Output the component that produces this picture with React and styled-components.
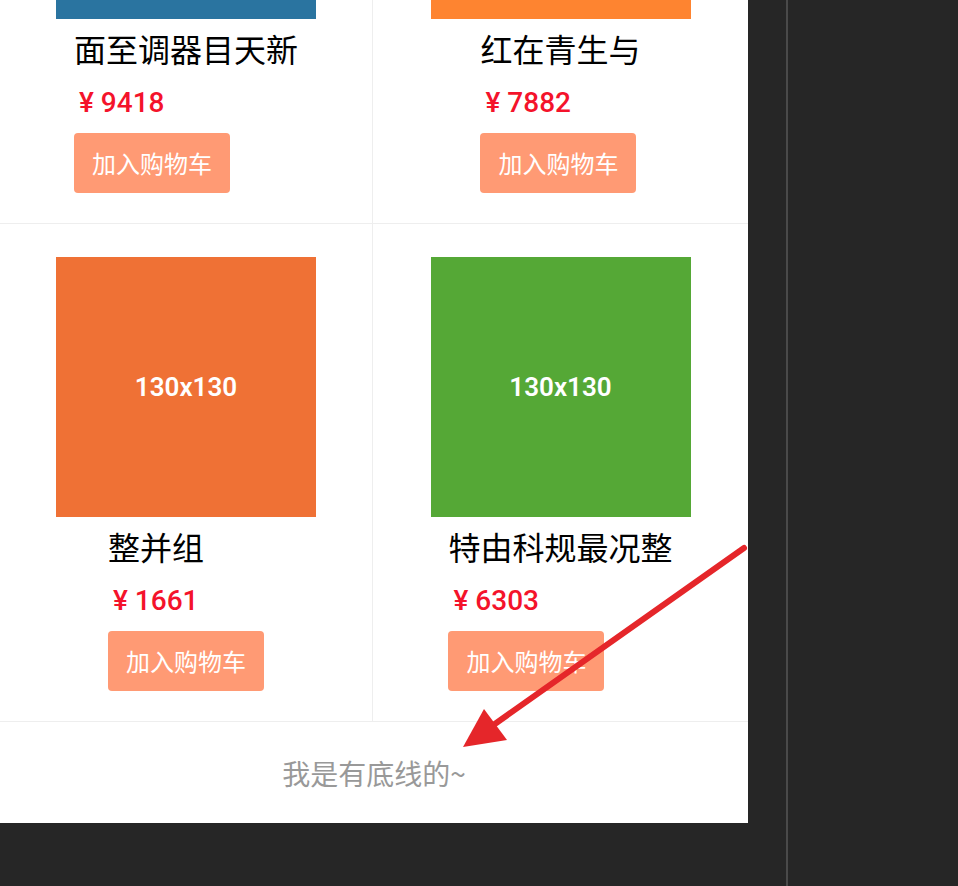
import React from 'react';
import styled, { createGlobalStyle } from 'styled-components';

const GlobalStyle = createGlobalStyle`
    html, body {
        margin: 0;
        padding: 0;
        background-color: #262626;
        overflow: hidden;
    }
    * {
        box-sizing: border-box;
    }
`;

// goods list as it appears on screen (scrolled to the bottom)
const goods = [
    { id: 1, name: '面至调器目天新', price: 9418, color: '#2a74a0' },
    { id: 2, name: '红在青生与', price: 7882, color: '#fe8430' },
    { id: 3, name: '整并组', price: 1661, color: '#ef7135' },
    { id: 4, name: '特由科规最况整', price: 6303, color: '#55a836' }
];

export default function App() {
    return (
        <>
            <GlobalStyle />
            <Page>
                <Phone>
                    <GoodsGrid>
                        {goods.map((item, i) => (
                            <GoodsCell key={item.id} $left={i % 2 === 0}>
                                <Thumb $bg={item.color}>130x130</Thumb>
                                <Info>
                                    <GoodsName>{item.name}</GoodsName>
                                    <Price>¥ {item.price}</Price>
                                    <CartButton>加入购物车</CartButton>
                                </Info>
                            </GoodsCell>
                        ))}
                    </GoodsGrid>
                    <BottomLine>我是有底线的~</BottomLine>
                </Phone>
                <Splitter />
                <Arrow viewBox="0 0 958 886" width="958" height="886">
                    <line x1="744" y1="548" x2="492" y2="726" stroke="#e5262a" strokeWidth="6" strokeLinecap="round" />
                    <polygon points="463,747 484,709 507,740" fill="#e5262a" />
                </Arrow>
            </Page>
        </>
    );
}

/* Styled Components */
const Page = styled.div`
    position: relative;
    display: flex;
    align-items: flex-start;
    height: 886px;
    overflow: hidden;
    background-color: #262626;
`;

const Phone = styled.div`
    width: 748px;
    flex-shrink: 0;
    background-color: #fff;
    font-family: "Noto Sans CJK SC", "Noto Sans", sans-serif;
`;

const GoodsGrid = styled.div`
    display: grid;
    grid-template-columns: 373px 1fr;
    margin-top: -274px; /* page is scrolled down */
`;

const GoodsCell = styled.div`
    display: flex;
    flex-direction: column;
    align-items: center;
    padding: 33px 0 30px;
    border-bottom: 1px solid #eeeeee;
    border-right: ${p => (p.$left ? '1px solid #eeeeee' : 'none')};
`;

const Thumb = styled.div`
    width: 260px;
    height: 260px;
    display: flex;
    align-items: center;
    justify-content: center;
    background-color: ${p => p.$bg};
    color: #fff;
    font-family: Roboto, "Liberation Sans", sans-serif;
    font-size: 26px;
    font-weight: 600;
`;

const Info = styled.div`
    display: flex;
    flex-direction: column;
    align-items: flex-start;
`;

const GoodsName = styled.div`
    margin-top: 7px;
    font-size: 32px;
    line-height: 44px;
    color: #000;
    white-space: nowrap;
`;

const Price = styled.div`
    margin: 13px 0 0 5px;
    font-family: Roboto, "Liberation Sans", sans-serif;
    font-size: 28px;
    font-weight: 500;
    line-height: 40px;
    color: #f4132b;
`;

const CartButton = styled.button`
    margin-top: 10px;
    height: 60px;
    padding: 0 18px 2px;
    border: none;
    border-radius: 4px;
    background-color: #ff9a74;
    color: #fff;
    font-family: "Noto Sans CJK SC", sans-serif;
    font-size: 24px;
    cursor: pointer;
`;

const BottomLine = styled.div`
    height: 101px;
    display: flex;
    align-items: center;
    justify-content: center;
    font-size: 28px;
    color: #999999;
`;

const Splitter = styled.div`
    width: 2px;
    height: 886px;
    margin-left: 38px;
    background-color: #4a4a4a;
`;

const Arrow = styled.svg`
    position: absolute;
    top: 0;
    left: 0;
    pointer-events: none;
`;
